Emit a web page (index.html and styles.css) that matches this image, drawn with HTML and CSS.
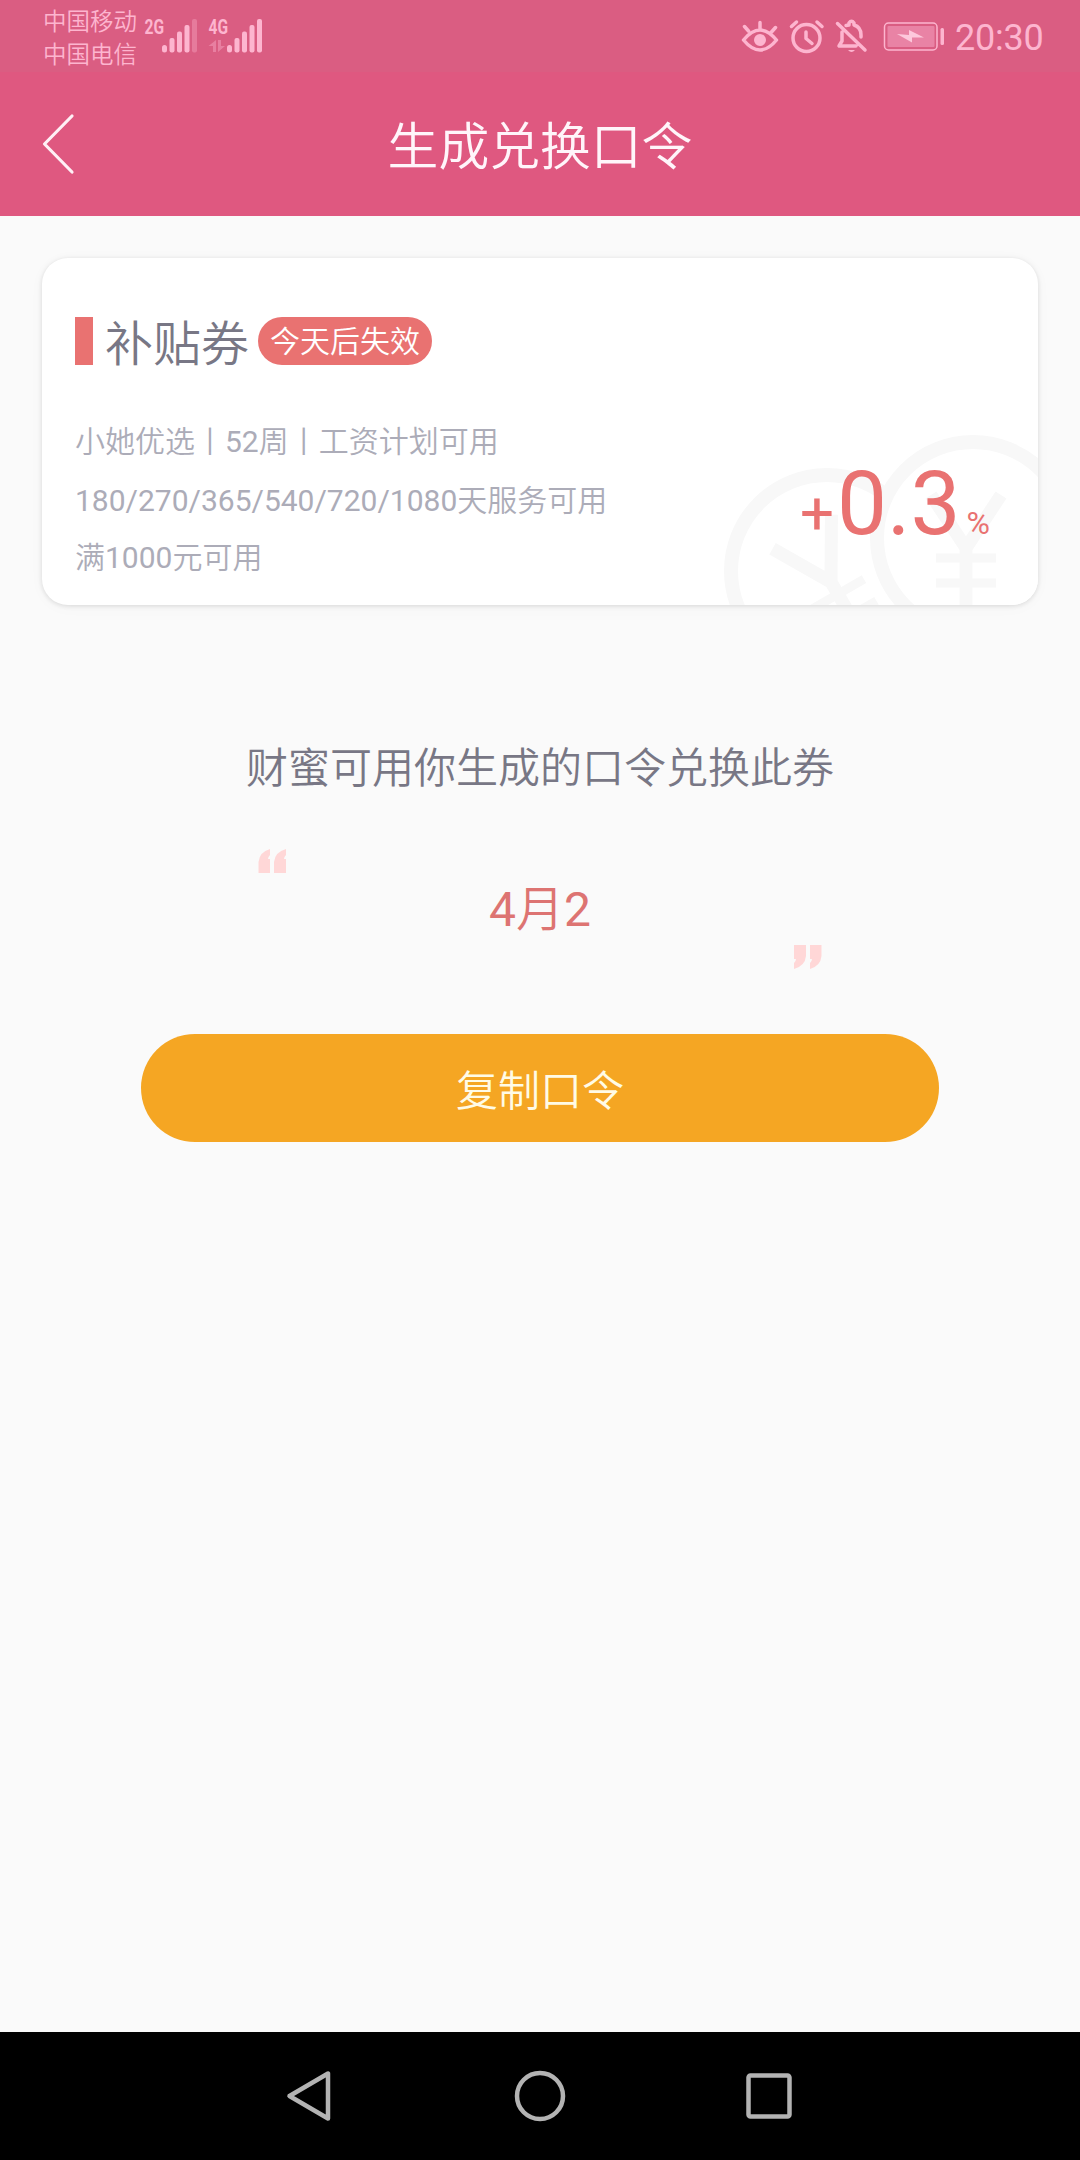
FILE: index.html
```html
<!DOCTYPE html>
<html lang="zh-CN">
<head>
<meta charset="utf-8">
<title>生成兑换口令</title>
<link rel="stylesheet" href="styles.css">
</head>
<body>
<div class="statusbar">
  <div class="carriers"><span>中国移动</span><span>中国电信</span></div>
  <svg class="signals" width="122" height="52" viewBox="142 8 122 52">
    <g fill="#fdb5cf">
      <text class="net" transform="translate(144.5 34) scale(.76 1)">2G</text>
      <text class="net" transform="translate(208.5 34) scale(.76 1)">4G</text>
      <rect x="162" y="45" width="5" height="7.500" rx="2.500"/><rect x="169.500" y="38" width="5" height="14.500" rx="2"/><rect x="177" y="31.500" width="5" height="21" rx="2"/><rect x="184.500" y="25" width="5" height="27.500" rx="2"/><rect x="192" y="19" width="5" height="33.500" rx="2" opacity=".35"/>
      <rect x="227" y="45" width="5" height="7.500" rx="2.500"/><rect x="234.500" y="38" width="5" height="14.500" rx="2"/><rect x="242" y="31.500" width="5" height="21" rx="2"/><rect x="249.500" y="25" width="5" height="27.500" rx="2"/><rect x="257" y="19" width="5" height="33.500" rx="2"/>
      <path d="M208.500 46L216 40V52H213V46ZM218 40H221V46H225L218 52Z" opacity=".4"/>
    </g>
  </svg>
  <svg class="sysicons" width="206" height="40" viewBox="740 16 206 40" fill="none" stroke="#fdb5cf" stroke-width="3.500" stroke-linecap="round" stroke-linejoin="round">
    <path d="M743.500 40Q760 20 776.500 40Q760 60 743.500 40ZM760 29V22.500M748.500 31L744.500 26.500M771.500 32L775.500 27.500"/><circle cx="760" cy="40" r="6" fill="#fdb5cf" stroke="none"/>
    <circle cx="806.500" cy="38" r="13.500"/><path d="M806 32V38.500L812 43.500M791.500 26.500L796.500 22M817 22L822 26.500"/>
    <path d="M837.500 23.500L865 50M842 32V41L839 46H856M846 25.500L849 25V23Q851.500 19.500 854 23V25Q861 27 861 35V37"/><path d="M848 50H855Q851.500 54 848 50Z" fill="#fdb5cf" stroke="none"/>
    <rect x="884.500" y="23" width="52.500" height="27" rx="4" stroke-width="1.500"/><rect x="887.500" y="26" width="47" height="21" rx="1" fill="#e983a5" stroke="none"/><path d="M897 34L909 35L909 30L924 37.500L912 37.500L912 42.500Z" fill="#fdc8dc" stroke="none"/><rect x="940.500" y="28" width="3.500" height="17" rx="1.500" fill="#fdb5cf" stroke="none"/>
  </svg>
  <span class="clock">20:30</span>
</div>
<header class="header">
  <svg class="back" width="36" height="64" viewBox="0 0 36 64"><path d="M31 4L3.500 32L31 60" fill="none" stroke="#fff0f6" stroke-width="3.200" stroke-linecap="round" stroke-linejoin="round"/></svg>
  <h1>生成兑换口令</h1>
</header>
<main class="main">
  <section class="card">
    <svg class="coins" width="338" height="173" viewBox="700 432 338 173" fill="none" stroke="#f8f8f8" stroke-width="14">
      <circle cx="827" cy="571" r="96"/>
      <g transform="rotate(-30 831 582)" stroke-width="13"><path d="M797 524L831 582L865 524M831 582V640"/><path d="M801 596H861M801 621H861" stroke-width="9"/></g>
      <circle cx="973" cy="538" r="96" fill="#fff"/>
      <path d="M931 495L966 548L1001 495M966 548V610" stroke-width="13"/><path d="M936 558H996M936 583H996" stroke-width="9"/>
    </svg>
    <div class="card-head"><i class="mark"></i><h2>补贴券</h2><span class="badge">今天后失效</span></div>
    <div class="card-body">
      <div class="terms"><p>小她优选丨52周丨工资计划可用</p><p>180/270/365/540/720/1080天服务可用</p><p>满1000元可用</p></div>
      <div class="rate"><span class="plus">+</span><span class="num">0.3</span><span class="pct">%</span></div>
    </div>
  </section>
  <p class="hint">财蜜可用你生成的口令兑换此券</p>
  <div class="quote">
    <svg class="q-open" width="30" height="24" viewBox="0 0 30 24"><path id="q" d="M.5 24V13Q1.500 3 12 0V6Q10 8 10 10H12V24ZM16 24V13Q17 3 28 0V6Q26 8 26 10H28V24Z" fill="#ffd7d7"/></svg>
    <span class="code">4月2</span>
    <svg class="q-close" width="30" height="24" viewBox="0 0 30 24"><use href="#q" transform="rotate(180 15 12)"/></svg>
  </div>
  <button class="copy">复制口令</button>
</main>
<nav class="navbar">
  <svg width="60" height="60" viewBox="0 0 60 60"><path d="M47 7.500V52.500L8.500 30Z"/></svg>
  <svg width="60" height="60" viewBox="0 0 60 60"><circle cx="30" cy="30" r="23"/></svg>
  <svg width="60" height="60" viewBox="0 0 60 60"><rect x="9.500" y="9.500" width="41" height="41" rx="2"/></svg>
</nav>
</body>
</html>
```
FILE: styles.css
```css
* { box-sizing: border-box; margin: 0; padding: 0; }
body {
  width: 1080px;
  height: 2160px;
  display: flex;
  flex-direction: column;
  background: #fafafa;
  font-family: Roboto, "Noto Sans CJK SC DemiLight", "Noto Sans CJK SC", sans-serif;
  font-weight: 400;
}
h1, h2 { font-weight: 400; }
svg { display: block; flex: none; }
.statusbar {
  height: 72px;
  flex: none;
  display: flex;
  align-items: flex-start;
  padding-left: 43px;
  background: #da5d82;
  color: #fdb5cf;
}
.carriers {
  display: flex;
  flex-direction: column;
  width: 99px;
  padding-top: 6px;
  font-size: 23.5px;
  line-height: 33px;
}
.signals { margin-top: 8px; overflow: visible; }
.net { font: 700 20.5px Roboto, sans-serif; }
.sysicons { margin: 16px 9px 0 476px; }
.clock { font-size: 36px; line-height: 42px; margin-top: 17px; letter-spacing: -0.2px; }
.header {
  height: 144px;
  flex: none;
  display: grid;
  grid-template-columns: 36px 1fr 36px;
  padding: 0 41px;
  background: #df5880;
  color: #fff5fa;
}
.back { margin-top: 40px; }
h1 { text-align: center; font-size: 50.8px; line-height: 72px; padding-top: 40px; }
.main { flex: 1; display: flex; flex-direction: column; align-items: center; padding-top: 42px; }
.card {
  position: relative;
  width: 996px;
  height: 347px;
  flex: none;
  padding: 57px 33px 0;
  background: #fff;
  border-radius: 26px;
  box-shadow: 0 1px 5px rgba(0, 0, 0, .13), 0 2px 18px rgba(0, 0, 0, .025);
}
.coins { position: absolute; right: 0; bottom: 0; border-bottom-right-radius: 26px; }
.card-head { position: relative; display: flex; align-items: center; height: 52px; }
.mark { width: 18px; height: 48px; background: #e97271; }
h2 { margin-left: 12px; padding-top: 7px; font-size: 48px; line-height: 52px; color: #787785; }
.badge {
  margin-left: 9px;
  width: 174px;
  height: 48px;
  padding-top: 1px;
  border-radius: 24px;
  background: #e97271;
  color: #fff;
  font-size: 30px;
  line-height: 48px;
  text-align: center;
}
.card-body { position: relative; display: flex; justify-content: space-between; padding-top: 46px; }
.terms { color: #acacb8; font-size: 30px; line-height: 57px; white-space: nowrap; }
.terms p:nth-child(2) { padding-top: 2px; }
.rate { display: flex; align-items: baseline; padding: 38px 15px 0 0; color: #e97271; line-height: 105px; }
.plus { font-size: 60px; margin-right: 3px; }
.num { font-size: 89px; }
.pct { font-size: 32px; margin-left: 6px; }
.hint { margin-top: 134px; font-size: 42px; line-height: 60px; color: #787785; }
.quote { width: 564px; height: 120px; margin-top: 50px; display: flex; justify-content: space-between; align-items: center; }
.q-open { align-self: flex-start; }
.q-close { align-self: flex-end; }
.code { font-size: 48px; line-height: 60px; padding-top: 2px; color: #dd7472; }
.copy {
  width: 798px;
  height: 108px;
  margin-top: 65px;
  padding-bottom: 2px;
  border: 0;
  border-radius: 54px;
  background: #f5a623;
  color: #fffbe6;
  font: 400 42px Roboto, "Noto Sans CJK SC DemiLight", "Noto Sans CJK SC", sans-serif;
}
.navbar { height: 128px; flex: none; display: flex; justify-content: center; align-items: center; gap: 169px; background: #000; }
.navbar svg { fill: none; stroke: #b3b3b3; stroke-width: 4.5; stroke-linejoin: round; }
```
